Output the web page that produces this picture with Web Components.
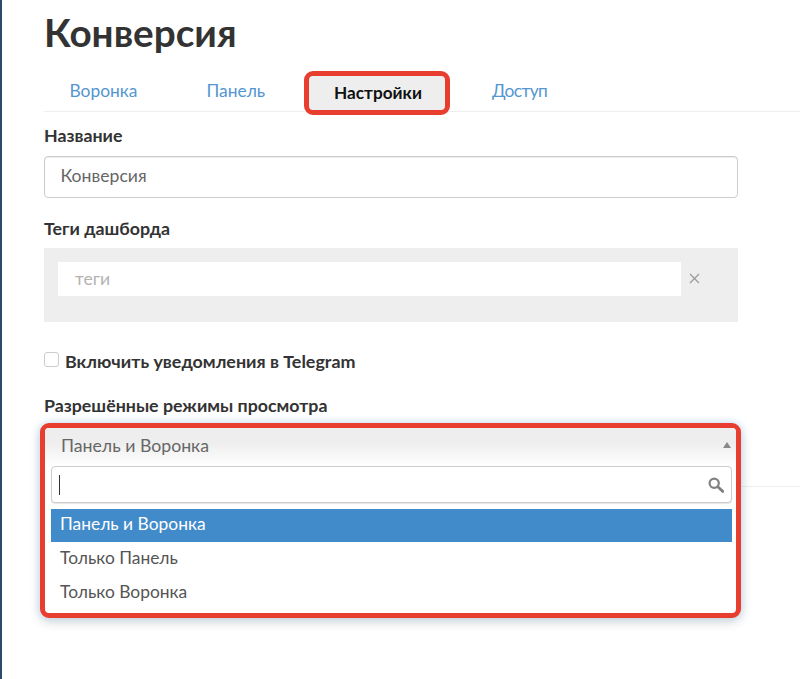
<!DOCTYPE html>
<html lang="ru">
<head>
<meta charset="utf-8">
<title>Конверсия</title>
<style>
  html, body { margin: 0; height: 100%; background: #fff; overflow: hidden; }
  body { font-family: Lato, "Open Sans", sans-serif; color: #333; }
</style>
</head>
<body>
<dash-page>
  <h1 slot="title">Конверсия</h1>
  <dash-tabs slot="tabs">
    <dash-tab style="--w:137px;--pad:25.5px">Воронка</dash-tab>
    <dash-tab style="--w:123px;--pad:25.5px">Панель</dash-tab>
    <dash-tab active>Настройки</dash-tab>
    <dash-tab style="--pad:42px;--ls:-.6px">Доступ</dash-tab>
  </dash-tabs>
  <form-field label="Название"><text-box value="Конверсия"></text-box></form-field>
  <form-field label="Теги дашборда" style="--top:21px;--gap:9px"><tag-box placeholder="теги"></tag-box></form-field>
  <check-row>Включить уведомления в Telegram</check-row>
  <form-field label="Разрешённые режимы просмотра" style="--top:24px;--gap:7px">
    <mode-select selected="Панель и Воронка">
      <select-option active>Панель и Воронка</select-option>
      <select-option>Только Панель</select-option>
      <select-option>Только Воронка</select-option>
    </mode-select>
  </form-field>
  <dash-rule></dash-rule>
</dash-page>

<script>
class DashPage extends HTMLElement {
  constructor() {
    super();
    this.attachShadow({ mode: 'open' });
    this.shadowRoot.innerHTML = `
      <style>
        :host { display: block; height: 679px; box-sizing: border-box; border-left: 2px solid #2c4a6b; padding: 0 0 0 42px; }
        .head ::slotted(h1) { margin: 0; padding-top: 10px; font-size: 38.7px; line-height: 44px; font-weight: 700; color: #333; }
        .body { width: 694px; }
      </style>
      <div class="head"><slot name="title"></slot></div>
      <slot name="tabs"></slot>
      <div class="body"><slot></slot></div>
    `;
  }
}

class DashTabs extends HTMLElement {
  constructor() {
    super();
    this.attachShadow({ mode: 'open' });
    this.shadowRoot.innerHTML = `
      <style>
        :host { display: flex; height: 40px; margin-top: 17px; border-bottom: 1px solid #eee; align-items: flex-start; }
      </style>
      <slot></slot>
    `;
  }
}

class DashTab extends HTMLElement {
  constructor() {
    super();
    this.attachShadow({ mode: 'open' });
    this.shadowRoot.innerHTML = `
      <style>
        :host { display: block; box-sizing: border-box; width: var(--w, auto); padding: 0 0 0 var(--pad, 26px); font-size: 17.4px; line-height: 40px; letter-spacing: var(--ls, 0); color: #5496d0; }
        :host([active]) {
          width: 146px; height: 44px; padding: 0 0 0 2px; text-align: center; line-height: 34px; font-size: 17.2px;
          background: #eee; border: 5px solid #e83e30; border-radius: 9px;
          font-weight: 700; color: #111; position: relative;
        }
      </style>
      <slot></slot>
    `;
  }
}

class FormField extends HTMLElement {
  constructor() {
    super();
    this.attachShadow({ mode: 'open' });
    this.shadowRoot.innerHTML = `
      <style>
        :host { display: block; margin-top: var(--top, 14px); }
        label { display: block; font-size: 17.8px; line-height: 18px; padding-bottom: 2px; font-weight: 700; color: #333; margin-bottom: var(--gap, 10px); }
      </style>
      <label></label>
      <slot></slot>
    `;
    this.shadowRoot.querySelector('label').textContent = this.getAttribute('label');
  }
}

class TextBox extends HTMLElement {
  constructor() {
    super();
    this.attachShadow({ mode: 'open' });
    this.shadowRoot.innerHTML = `
      <style>
        :host { display: block; box-sizing: border-box; height: 42px; padding: 0 15.5px; border: 1px solid #ccc; border-radius: 4px; box-shadow: inset 0 1px 1px rgba(0,0,0,.075); font-size: 17.6px; line-height: 38px; color: #666; }
      </style>
      <span></span>
    `;
    this.shadowRoot.querySelector('span').textContent = this.getAttribute('value');
  }
}

class TagBox extends HTMLElement {
  constructor() {
    super();
    this.attachShadow({ mode: 'open' });
    this.shadowRoot.innerHTML = `
      <style>
        :host { display: flex; box-sizing: border-box; height: 74px; padding: 14px; background: #eee; align-items: flex-start; }
        .input { width: 623px; height: 34px; box-sizing: border-box; padding: 0 17px; background: #fff; font-size: 17.6px; line-height: 33px; color: #b3b3b3; }
        svg { margin: 11px 0 0 8px; }
      </style>
      <div class="input"></div>
      <svg width="11" height="11" viewBox="0 0 11 11"><path d="M1 1l9 9M10 1l-9 9" stroke="#999" stroke-width="1.2" fill="none"/></svg>
    `;
    this.shadowRoot.querySelector('.input').textContent = this.getAttribute('placeholder');
  }
}

class CheckRow extends HTMLElement {
  constructor() {
    super();
    this.attachShadow({ mode: 'open' });
    this.shadowRoot.innerHTML = `
      <style>
        :host { display: flex; margin-top: 30px; height: 20px; align-items: flex-start; font-size: 17.9px; line-height: 18px; font-weight: 700; color: #333; }
        i { width: 13px; height: 13px; margin: 0 6px 0 0; border: 1px solid #ccc; border-radius: 3px; background: #fff; }
      </style>
      <i></i><span><slot></slot></span>
    `;
  }
}

class ModeSelect extends HTMLElement {
  constructor() {
    super();
    this.attachShadow({ mode: 'open' });
    this.shadowRoot.innerHTML = `
      <style>
        :host { display: block; position: relative; height: 42px; }
        .drop {
          position: absolute; z-index: 1; left: -4px; top: 0; width: 691px; height: 185px; background: #fff;
          border: 5px solid #e83e30; border-radius: 9px;
          box-shadow: 0 0 8px rgba(102,175,233,.35), 0 4px 12px rgba(0,0,0,.15);
          font-size: 17.7px; color: #666;
        }
        .current { height: 38px; padding-left: 16px; line-height: 36px; background: linear-gradient(#eee 40%, #fff); position: relative; border-radius: 4px 4px 0 0; }
        .current::after { content: ""; position: absolute; right: 5px; top: 14px; border: 4px solid transparent; border-top: 0; border-bottom: 6px solid #888; }
        .search { display: flex; align-items: center; justify-content: space-between; box-sizing: border-box; height: 37px; margin: 0 4px 6px 6px; padding: 0 7px; border: 1px solid #ccc; border-radius: 4px; background: #fff; box-shadow: 0 1px 1px rgba(0,0,0,.1); }
        .caret { width: 1px; height: 20px; background: #333; }
        .list { margin: 0 4px 0 6px; }
      </style>
      <div class="drop">
        <div class="current"></div>
        <div class="search">
          <span class="caret"></span>
          <svg width="16" height="16" viewBox="0 0 16 16"><circle cx="6.2" cy="6.2" r="4.6" fill="none" stroke="#808080" stroke-width="2.2"/><path d="M9.8 9.8l5 4.6" stroke="#808080" stroke-width="2.8" stroke-linecap="round"/></svg>
        </div>
        <div class="list"><slot></slot></div>
      </div>
    `;
    this.shadowRoot.querySelector('.current').textContent = this.getAttribute('selected');
  }
}

class SelectOption extends HTMLElement {
  constructor() {
    super();
    this.attachShadow({ mode: 'open' });
    this.shadowRoot.innerHTML = `
      <style>
        :host { display: block; height: 34px; padding-left: 9px; font-size: 17.4px; line-height: 32px; color: #555; }
        :host([active]) { height: 33px; line-height: 30px; background: #428bca; color: #fff; }
      </style>
      <slot></slot>
    `;
  }
}

class DashRule extends HTMLElement {
  constructor() {
    super();
    this.attachShadow({ mode: 'open' });
    this.shadowRoot.innerHTML = `
      <style>
        :host { display: block; width: 756px; margin-top: 21px; border-top: 1px solid #eee; }
      </style>
    `;
  }
}

customElements.define('dash-page', DashPage);
customElements.define('dash-tabs', DashTabs);
customElements.define('dash-tab', DashTab);
customElements.define('form-field', FormField);
customElements.define('text-box', TextBox);
customElements.define('tag-box', TagBox);
customElements.define('check-row', CheckRow);
customElements.define('mode-select', ModeSelect);
customElements.define('select-option', SelectOption);
customElements.define('dash-rule', DashRule);
</script>
</body>
</html>
